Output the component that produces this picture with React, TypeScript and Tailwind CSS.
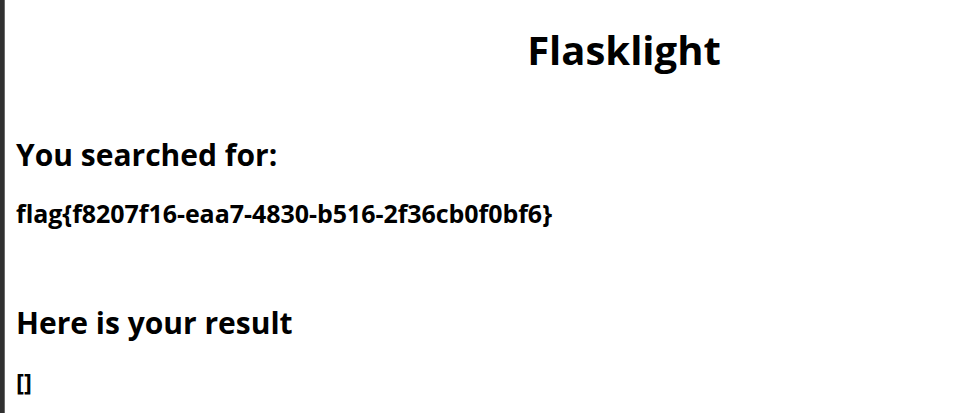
export default function App() {
  return (
    <div className="flex h-[413px] w-[968px] overflow-hidden bg-white text-black" style={{ fontFamily: '"Open Sans", "Noto Sans", sans-serif' }}>
      <div className="w-[4px] shrink-0 bg-[#303030]" />
      <div className="w-[1px] shrink-0 bg-[#6a6a6a]" />
      <div className="shrink-0 w-[1227px] pl-[11px]">
        <h1 className="mt-[24px] text-center text-[40px] font-bold leading-[52px]">Flasklight</h1>
        <h2 className="mt-[59px] text-[30px] font-bold leading-[40px]">You searched for:</h2>
        <h4 className="mt-[21px] text-[25px] font-bold leading-[34px] tracking-[-0.05px]">flag{'{'}f8207f16-eaa7-4830-b516-2f36cb0f0bf6{'}'}</h4>
        <h2 className="mt-[73px] text-[30px] font-bold leading-[40px]">Here is your result</h2>
        <h4 className="mt-[22px] text-[24px] font-bold leading-[34px]">[]</h4>
      </div>
    </div>
  );
}
